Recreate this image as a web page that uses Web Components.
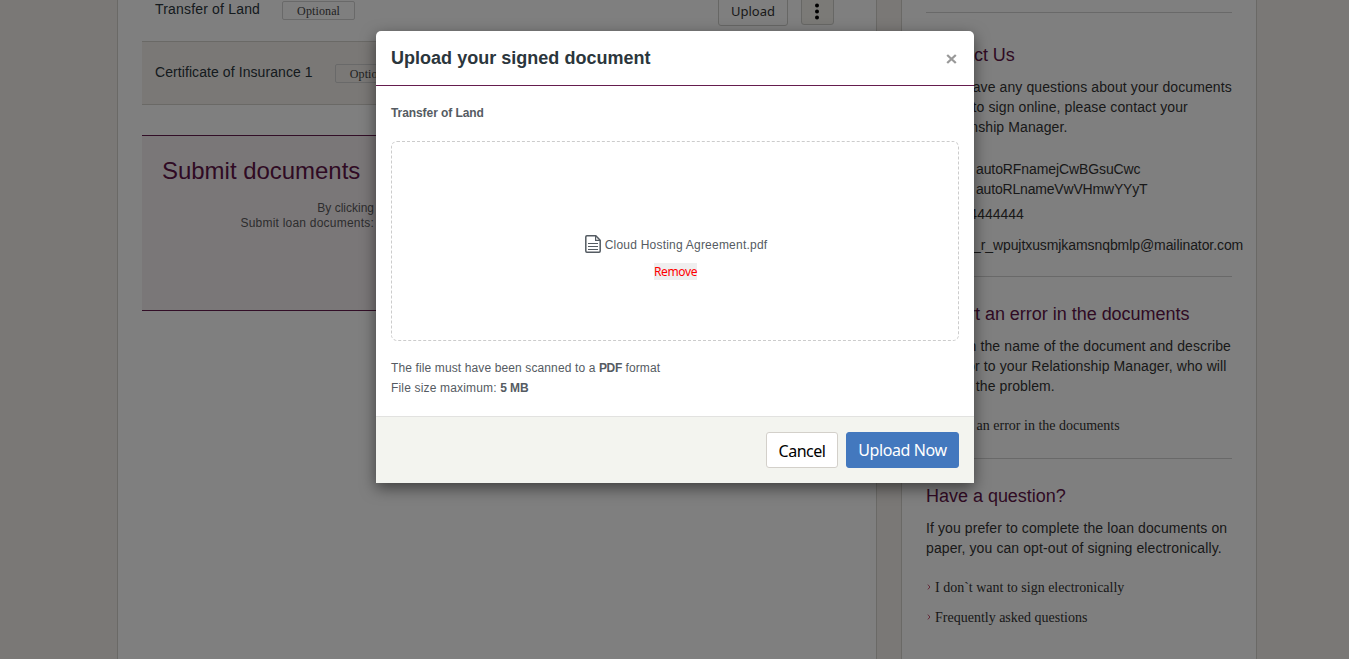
<!DOCTYPE html>
<html lang="en">
<head>
<meta charset="utf-8">
<title>Loan documents</title>
<style>
html,body{margin:0;height:100%;overflow:hidden}
body{background:#f4f1ed;font-family:"Liberation Sans",Arial,sans-serif;font-size:14px;line-height:20px;color:#333}
</style>
</head>
<body>
<loan-page></loan-page>
<script>
const define=(name,html)=>customElements.define(name,class extends HTMLElement{
  constructor(){
    super();
    const t=document.createElement('template');
    t.innerHTML=html;
    this.attachShadow({mode:'open'}).append(t.content.cloneNode(true));
  }
});

define('status-tag',`<style>
:host{display:block;box-sizing:border-box;width:73px;height:19px;border:1px solid #d2d2d2;border-radius:2px;text-align:center;font:12px/19px "Liberation Serif","Times New Roman",serif;color:#444;letter-spacing:.12px}
</style><slot></slot>`);

define('document-row',`<style>
:host{display:flex;box-sizing:border-box;height:64px;padding:0 18px 0 13px;align-items:center;color:#2b363c}
:host([shaded]){background:#f4f1ed;border-top:1px solid #d4d2cd;border-bottom:1px solid #d4d2cd}
.name{margin-right:22px;white-space:nowrap;letter-spacing:var(--track,0)}
:host([shaded]) .name{margin-top:-2px}
status-tag{margin-top:2px}
.actions{margin-left:auto;display:flex;gap:13px;margin-top:4px}
:host([shaded]) status-tag{margin-top:0}
</style><span class="name"><slot></slot></span><status-tag>Optional</status-tag><div class="actions"><slot name="actions"></slot></div>`);

define('row-button',`<style>
:host{display:flex;box-sizing:border-box;width:70px;height:30px;border:1px solid #cfcfcb;border-radius:3px;align-items:center;justify-content:center;font:13px/20px "Noto Sans","Open Sans",sans-serif;color:#333}
:host([menu]){width:33px;background:#f6f4ee;height:29px}
::slotted(svg){margin:2px 1px 0 0}
</style><slot></slot>`);

define('submit-panel',`<style>
:host{display:block;box-sizing:border-box;height:176px;margin-top:30px;padding:21px 20px;background:#f5eff1;border-top:1px solid #651d4e;border-bottom:1px solid #651d4e}
h2{margin:0;font-size:24px;line-height:28px;font-weight:400;color:#601548;letter-spacing:-.03px}
p{margin:16px 0 0;width:212px;text-align:right;font-size:12px;line-height:15px;color:#5a5a5c;letter-spacing:.22px}
.lead{letter-spacing:0}
</style><h2>Submit documents</h2><p><span class="lead">By clicking</span><br>Submit loan documents:</p>`);

define('side-section',`<style>
:host{display:block;box-sizing:border-box;border-top:1px solid #d2d2d2;padding-top:25px;height:var(--h,auto)}
h3{margin:0 0 10px;font-size:18px;line-height:24px;font-weight:400;color:#601548;white-space:nowrap;letter-spacing:-.02px}
</style><h3><slot name="title"></slot></h3><slot></slot>`);

define('side-text',`<style>
:host{display:block;white-space:nowrap;color:#333;letter-spacing:var(--track,.1px)}
</style><slot></slot>`);

define('side-link',`<style>
:host{display:flex;height:20px;margin-top:10px;font:14px/20px "Liberation Serif","Times New Roman",serif;color:#333;white-space:nowrap}
svg{width:4px;height:6px;margin:6px 4px 0 1px;flex:none}
</style><svg viewBox="0 0 4 6" fill="none" stroke="#c75070" stroke-width="1"><path d="M.9.6 2.9 3 .9 5.4"/></svg><slot></slot>`);

define('file-drop',`<style>
:host{display:flex;box-sizing:border-box;height:200px;margin-top:18px;border:1px dashed #ccc;border-radius:6px;flex-direction:column;align-items:center;padding-top:92px}
.file{display:flex;align-items:center;height:21px;letter-spacing:.22px;padding-left:2px}
svg{width:16px;height:18px;margin:-2px 4px 0 0}
.remove{margin-top:8px;height:17px;margin-left:1px;background:#efefef;color:#f00;font:12px/17px "Noto Sans","Open Sans",sans-serif;letter-spacing:-.35px}
</style><div class="file"><svg viewBox="0 0 16 18" fill="none" stroke="#545b62" stroke-width="1.5"><path d="M1.9.8H10.8L15.2 5.2V16.1Q15.2 17.2 14.1 17.2H1.9Q.8 17.2.8 16.1V1.9Q.8.8 1.9.8Z"/><path d="M10.6 1V5.4H15" stroke-width="1.2"/><path d="M3 8.5H13M3 11.5H13M3 14.5H13" stroke-width="1.2"/></svg><slot></slot></div><div class="remove">Remove</div>`);

define('modal-button',`<style>
:host{display:block;box-sizing:border-box;width:72px;height:36px;border:1px solid #d3d0ca;border-radius:3px;background:#fff;color:#000;text-align:center;white-space:nowrap;font:16px/37px "Noto Sans","Open Sans",sans-serif;letter-spacing:-.5px}
:host([primary]){width:113px;background:#4378be;border-color:#4378be;color:#fff;line-height:35px;letter-spacing:-.4px}
</style><slot></slot>`);

define('upload-modal',`<style>
:host{position:absolute;inset:0;background:rgba(0,0,0,.5)}
.dialog{box-sizing:border-box;width:598px;height:452px;margin:31px 0 0 376px;background:#fff;border-radius:5px 5px 0 0;box-shadow:0 5px 15px rgba(0,0,0,.5);display:flex;flex-direction:column;font-size:12px;color:#555b62}
header{box-sizing:border-box;height:55px;border-bottom:1px solid #651d4e;padding:0 17px 0 15px;display:flex;align-items:center;justify-content:space-between}
h1{margin:0;font-size:18px;line-height:24px;color:#2b363c;letter-spacing:.02px}
header svg{width:11px;height:10px;margin-top:1px}
main{flex:1;padding:17px 15px 0}
main>b{letter-spacing:-.08px}
.hints{margin-top:17px;letter-spacing:.12px}
.hints b{letter-spacing:-.3px}
.hints .size{letter-spacing:.17px}
.hints .size b{letter-spacing:-.1px}
footer{box-sizing:border-box;height:67px;border-top:1px solid #e2e2e0;background:#f3f4ef;padding:15px;display:flex;justify-content:flex-end;gap:8px}
</style><div class="dialog">
<header><h1>Upload your signed document</h1><svg viewBox="0 0 11 10" stroke="#999" stroke-width="2.3"><path d="M1.2 1 9.8 9M9.8 1 1.2 9"/></svg></header>
<main><b>Transfer of Land</b><file-drop>Cloud Hosting Agreement.pdf</file-drop>
<div class="hints">The file must have been scanned to a <b>PDF</b> format<br><span class="size">File size maximum: <b>5 MB</b></span></div></main>
<footer><modal-button>Cancel</modal-button><modal-button primary>Upload Now</modal-button></footer>
</div>`);

define('loan-page',`<style>
:host{display:block;position:relative;height:100%;overflow:hidden}
.columns{display:flex;gap:24px;height:100%;padding-left:117px}
.panel{box-sizing:border-box;background:#fff;border:solid #d4d2cd;border-width:0 1px;flex:none}
.docs{width:760px;padding:0 24px}
.first{margin-top:-23px;--track:.18px}
.second{--track:.08px}
.side{width:356px;padding:12px 24px 0}
.names{margin:22px 0 0 50px;--track:-.18px}
.names span{letter-spacing:-.1px}
.phone{margin:5px 0 0 20px;--track:0}
.email{margin:11px 0 0 20px;--track:-.08px}
.links{padding-top:10px}
</style>
<div class="columns">
<div class="panel docs">
<document-row class="first">Transfer of Land<row-button slot="actions">Upload</row-button><row-button slot="actions" menu><svg width="4" height="17" viewBox="0 0 4 17"><circle cx="2" cy="2.5" r="2"/><circle cx="2" cy="8.5" r="2"/><circle cx="2" cy="14.5" r="2"/></svg></row-button></document-row>
<document-row class="second" shaded>Certificate of Insurance 1</document-row>
<submit-panel></submit-panel>
</div>
<div class="panel side">
<side-section style="--h:264px;padding-top:30px"><span slot="title">Contact Us</span>
<side-text>If you have any questions about your documents<br>or how to sign online, please contact your<br>Relationship Manager.</side-text>
<side-text class="names"><span>autoRFnamejCwBGsuCwc</span><br>autoRLnameVwVHmwYYyT</side-text>
<side-text class="phone">4444444444</side-text>
<side-text class="email">auto_r_wpujtxusmjkamsnqbmlp@mailinator.com</side-text>
</side-section>
<side-section style="--h:182px"><span slot="title">Report an error in the documents</span>
<side-text>Mention the name of the document and describe<br>the error to your Relationship Manager, who will<br>resolve the problem.</side-text>
<div class="links"><side-link>Report an error in the documents</side-link></div></side-section>
<side-section><span slot="title">Have a question?</span>
<side-text>If you prefer to complete the loan documents on<br>paper, you can opt-out of signing electronically.</side-text>
<div class="links"><side-link>I don\`t want to sign electronically</side-link><side-link>Frequently asked questions</side-link></div></side-section>
</div>
</div>
<upload-modal></upload-modal>`);
</script>
</body>
</html>
